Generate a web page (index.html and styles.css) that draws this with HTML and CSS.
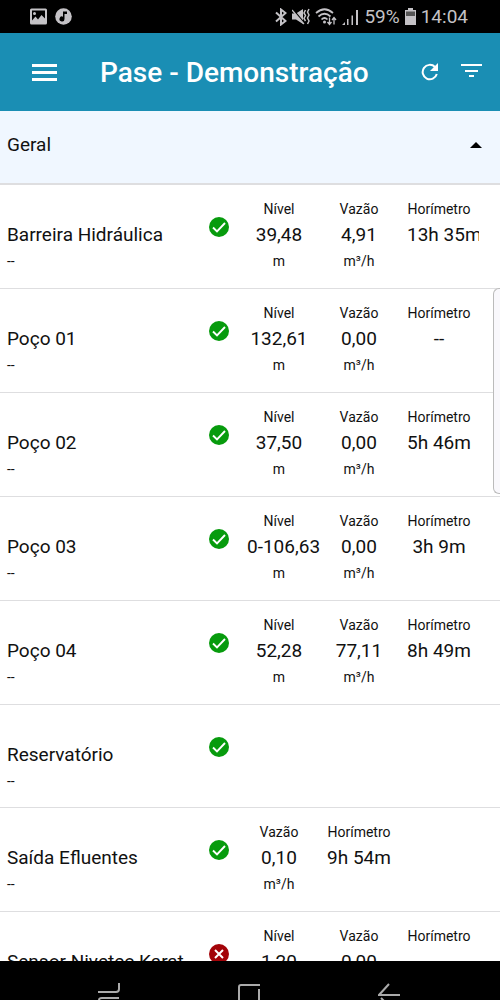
FILE: index.html
```
<!DOCTYPE html>
<html lang="pt-BR">

<head>
    <meta charset="UTF-8">
    <meta name="viewport" content="width=device-width, initial-scale=1.0">
    <title>Pase - Demonstração</title>
    <link rel="stylesheet" href="styles.css">
</head>

<body>
    <svg class="sprite" aria-hidden="true">
        <symbol id="icon-ok" viewBox="0 0 20 20">
            <circle cx="10" cy="10" r="10" fill="#079b0d" />
            <path d="M4 10.5l4 4 8-8.500" fill="none" stroke="#fff" stroke-width="1.900" />
        </symbol>
        <symbol id="icon-error" viewBox="0 0 20 20">
            <circle cx="10" cy="10" r="10" fill="#a30308" />
            <path d="M6 6l8 8M14 6l-8 8" fill="none" stroke="#fff" stroke-width="2" />
        </symbol>
    </svg>

    <div class="status-bar">
        <div class="status-group">
            <svg width="17" height="17" viewBox="0 0 17 16">
                <path fill="currentColor" fill-rule="evenodd" d="M1.500 0h14Q17 0 17 1.500v13q0 1.500-1.500 1.500h-14Q0 16 0 14.500v-13Q0 0 1.500 0zM2 2v10l3.500-4 2.500 3 3.500-4.500L15 10V2zM4.500 3.500a1.500 1.500 0 1 1 0 3 1.500 1.500 0 0 1 0-3z" />
            </svg>
            <svg width="17" height="17" viewBox="0 0 17 17">
                <circle cx="8.500" cy="8.500" r="8.300" fill="currentColor" />
                <path d="M8 3.500h4v2.500H9.500v5a2.500 2.500 0 1 1-1.500-2.300z" fill="#000" />
            </svg>
        </div>
        <div class="status-group status-right">
            <svg width="12" height="18" viewBox="0 0 12 18" fill="none" stroke="currentColor" stroke-width="2">
                <path d="M1 4.500l9.500 8.500L6 16.500v-15L10.500 5 1 13.500" />
            </svg>
            <svg width="18" height="18" viewBox="0 0 18 18" fill="none" stroke="currentColor">
                <path d="M0 5.500h4L11 1v15l-7-4.500H0z" fill="currentColor" stroke="none" />
                <path d="M1 1.500l12 14.500" stroke="#000" stroke-width="1.500" />
                <path d="M0 2l12 14" stroke-width="1.200" />
                <path d="M13.500 2l-1.500 3 1.500 2.500-1.500 3 1.500 2.500M17 1l-1.500 3L17 7l-1.500 3 1.500 3-1.500 3" stroke-width="1.500" />
            </svg>
            <svg width="22" height="18" viewBox="0 0 22 18" fill="none" stroke="currentColor" stroke-width="1.700">
                <path d="M1 5q8.500-7.500 17 0M3.500 8.500q6-5.500 12 0M6.500 11.500q3-3 6 0" />
                <circle cx="9.500" cy="14" r="1.500" fill="currentColor" stroke="none" />
                <path d="M14.500 9.500v7M12.500 14l2 2.500 2-2.500M19 16.500v-7M17 12l2-2.500 2 2.500" stroke-width="1.300" />
            </svg>
            <svg width="17" height="18" viewBox="0 0 17 18" fill="currentColor">
                <path d="M0 17l3-3v3zM5 11h1.500v6H5zM9.500 7.500H11V17H9.500zM14 2h2v15h-2z" />
            </svg>
            <span>59%</span>
            <svg width="11" height="18" viewBox="0 0 11 18">
                <path fill="currentColor" d="M3 0h5v2h3v15H0V2h3z" />
                <path fill="#555" d="M1 3.500h9V8H1z" />
            </svg>
            <span>14:04</span>
        </div>
    </div>

    <header class="toolbar">
        <button class="icon-button" aria-label="Menu">
            <svg width="25" height="17" viewBox="0 0 25 17" fill="currentColor">
                <path d="M0 0h25v3H0zM0 7h25v3H0zM0 14h25v3H0z" />
            </svg>
        </button>
        <h1>Pase - Demonstração</h1>
        <div class="actions">
            <button class="icon-button" aria-label="Atualizar">
                <svg width="18" height="18" viewBox="0 0 18 18">
                    <path d="M14 4A7.200 7.200 0 1 0 15.800 11" fill="none" stroke="currentColor" stroke-width="2" />
                    <path d="M17 0v8H9z" fill="currentColor" />
                </svg>
            </button>
            <button class="icon-button" aria-label="Filtrar">
                <svg width="21" height="16" viewBox="0 0 21 16" fill="currentColor">
                    <path d="M0 0h21v2H0zM4 6h13v2H4zM8 11h5v2H8z" />
                </svg>
            </button>
        </div>
    </header>

    <main>
        <button class="group-header" aria-expanded="true">
            <span>Geral</span>
            <svg width="12" height="6" viewBox="0 0 12 6">
                <path d="M0 6l6-6 6 6z" fill="#000" />
            </svg>
        </button>

        <ul class="stations">
            <li>
                <div class="station">
                    <h2>Barreira Hidráulica</h2>
                    <p>--</p>
                </div>
                <svg class="state" role="img" aria-label="OK"><use href="#icon-ok" /></svg>
                <div class="metrics">
                    <dl><dt>Nível</dt><dd>39,48</dd><dd class="unit">m</dd></dl>
                    <dl><dt>Vazão</dt><dd>4,91</dd><dd class="unit">m³/h</dd></dl>
                    <dl><dt>Horímetro</dt><dd>13h 35m</dd></dl>
                </div>
            </li>
            <li>
                <div class="station">
                    <h2>Poço 01</h2>
                    <p>--</p>
                </div>
                <svg class="state" role="img" aria-label="OK"><use href="#icon-ok" /></svg>
                <div class="metrics">
                    <dl><dt>Nível</dt><dd>132,61</dd><dd class="unit">m</dd></dl>
                    <dl><dt>Vazão</dt><dd>0,00</dd><dd class="unit">m³/h</dd></dl>
                    <dl><dt>Horímetro</dt><dd>--</dd></dl>
                </div>
            </li>
            <li>
                <div class="station">
                    <h2>Poço 02</h2>
                    <p>--</p>
                </div>
                <svg class="state" role="img" aria-label="OK"><use href="#icon-ok" /></svg>
                <div class="metrics">
                    <dl><dt>Nível</dt><dd>37,50</dd><dd class="unit">m</dd></dl>
                    <dl><dt>Vazão</dt><dd>0,00</dd><dd class="unit">m³/h</dd></dl>
                    <dl><dt>Horímetro</dt><dd>5h 46m</dd></dl>
                </div>
            </li>
            <li>
                <div class="station">
                    <h2>Poço 03</h2>
                    <p>--</p>
                </div>
                <svg class="state" role="img" aria-label="OK"><use href="#icon-ok" /></svg>
                <div class="metrics">
                    <dl><dt>Nível</dt><dd>0-106,63</dd><dd class="unit">m</dd></dl>
                    <dl><dt>Vazão</dt><dd>0,00</dd><dd class="unit">m³/h</dd></dl>
                    <dl><dt>Horímetro</dt><dd>3h 9m</dd></dl>
                </div>
            </li>
            <li>
                <div class="station">
                    <h2>Poço 04</h2>
                    <p>--</p>
                </div>
                <svg class="state" role="img" aria-label="OK"><use href="#icon-ok" /></svg>
                <div class="metrics">
                    <dl><dt>Nível</dt><dd>52,28</dd><dd class="unit">m</dd></dl>
                    <dl><dt>Vazão</dt><dd>77,11</dd><dd class="unit">m³/h</dd></dl>
                    <dl><dt>Horímetro</dt><dd>8h 49m</dd></dl>
                </div>
            </li>
            <li>
                <div class="station">
                    <h2>Reservatório</h2>
                    <p>--</p>
                </div>
                <svg class="state" role="img" aria-label="OK"><use href="#icon-ok" /></svg>
                <div class="metrics"></div>
            </li>
            <li>
                <div class="station">
                    <h2>Saída Efluentes</h2>
                    <p>--</p>
                </div>
                <svg class="state" role="img" aria-label="OK"><use href="#icon-ok" /></svg>
                <div class="metrics">
                    <dl><dt>Vazão</dt><dd>0,10</dd><dd class="unit">m³/h</dd></dl>
                    <dl><dt>Horímetro</dt><dd>9h 54m</dd></dl>
                </div>
            </li>
            <li>
                <div class="station">
                    <h2>Sensor Nivetec Karat</h2>
                </div>
                <svg class="state" role="img" aria-label="Erro"><use href="#icon-error" /></svg>
                <div class="metrics">
                    <dl><dt>Nível</dt><dd>1,20</dd></dl>
                    <dl><dt>Vazão</dt><dd>0,00</dd></dl>
                    <dl><dt>Horímetro</dt></dl>
                </div>
            </li>
        </ul>
    </main>

    <div class="edge-handle"></div>

    <nav class="nav-bar">
        <button aria-label="Recentes">
            <svg width="22" height="17" viewBox="0 0 22 17" fill="none" stroke="currentColor" stroke-width="2">
                <path d="M0 9h18q3 0 3-3V0M1 17q0-2 3-2h17" />
            </svg>
        </button>
        <button aria-label="Início">
            <svg width="22" height="17" viewBox="0 0 22 17" fill="none" stroke="currentColor" stroke-width="2">
                <path d="M1 17V4q0-2 2-2h19M21 6v11" />
            </svg>
        </button>
        <button aria-label="Voltar">
            <svg width="22" height="17" viewBox="0 0 22 17" fill="none" stroke="currentColor" stroke-width="2">
                <path d="M11 1L1 12h21M3 15l3 3" />
            </svg>
        </button>
    </nav>
</body>

</html>
```

FILE: styles.css
```
:root {
    --primary-color: #1a8eb4;
    --group-color: #f0f7ff;
    --border-color: #dedee0;
    --text-color: #111;
}

* {
    margin: 0;
    padding: 0;
    box-sizing: border-box;
}

body {
    display: flex;
    flex-direction: column;
    height: 100vh;
    overflow: hidden;
    position: relative;
    font-family: Roboto, "Liberation Sans", sans-serif;
    font-size: 14px;
    color: var(--text-color);
    background-color: #fff;
}

button {
    border: none;
    background: none;
    font: inherit;
    color: inherit;
    cursor: pointer;
}

svg {
    display: block;
    flex: none;
}

.sprite {
    position: absolute;
    width: 0;
    height: 0;
}

.status-bar {
    display: flex;
    justify-content: space-between;
    align-items: center;
    flex: none;
    height: 33px;
    padding: 0 32px 0 30px;
    background-color: #000;
    color: #c4c2c6;
    font-size: 19px;
}

.status-group {
    display: flex;
    align-items: center;
    gap: 8px;
}

.status-right {
    gap: 5px;
}

.toolbar {
    display: flex;
    align-items: center;
    flex: none;
    height: 78px;
    padding: 0 18px 0 32px;
    background-color: var(--primary-color);
    color: #fff;
}

.toolbar h1 {
    flex: 1;
    margin-left: 43px;
    font-size: 28px;
    font-weight: 500;
    white-space: nowrap;
}

.actions {
    display: flex;
    align-items: center;
    gap: 22px;
}

main {
    flex: 1;
    min-height: 0;
    overflow: hidden;
}

.group-header {
    display: flex;
    justify-content: space-between;
    align-items: center;
    width: 100%;
    padding: 21px 18px 25px 7px;
    border-bottom: 2px solid var(--border-color);
    background-color: var(--group-color);
    font-size: 19px;
    line-height: 26px;
}

.stations {
    list-style: none;
}

.stations li {
    display: flex;
    padding: 11px 21px 13px 7px;
    border-bottom: 1px solid var(--border-color);
    line-height: 26px;
}

.station {
    flex: 1;
    padding-top: 26px;
    white-space: nowrap;
}

.station h2,
.metrics dd {
    font-size: 19px;
    font-weight: 400;
}

.state {
    width: 20px;
    height: 20px;
    margin: 21px 10px 0;
}

.metrics {
    display: flex;
    flex: none;
    width: 240px;
    padding-bottom: 1px;
    overflow: hidden;
}

.metrics dl {
    width: 80px;
    padding: 0 8px;
    text-align: center;
    white-space: nowrap;
}

.metrics .unit {
    font-size: 14px;
}

.edge-handle {
    position: absolute;
    top: 288px;
    right: 0;
    width: 7px;
    height: 206px;
    border: 1px solid #bbb;
    border-right: none;
    border-radius: 6px 0 0 6px;
    background-color: #f9f8fc;
}

.nav-bar {
    display: flex;
    justify-content: center;
    align-items: flex-end;
    gap: 118px;
    flex: none;
    height: 39px;
    padding-right: 2px;
    background-color: #000;
    color: #aaa;
}
```
